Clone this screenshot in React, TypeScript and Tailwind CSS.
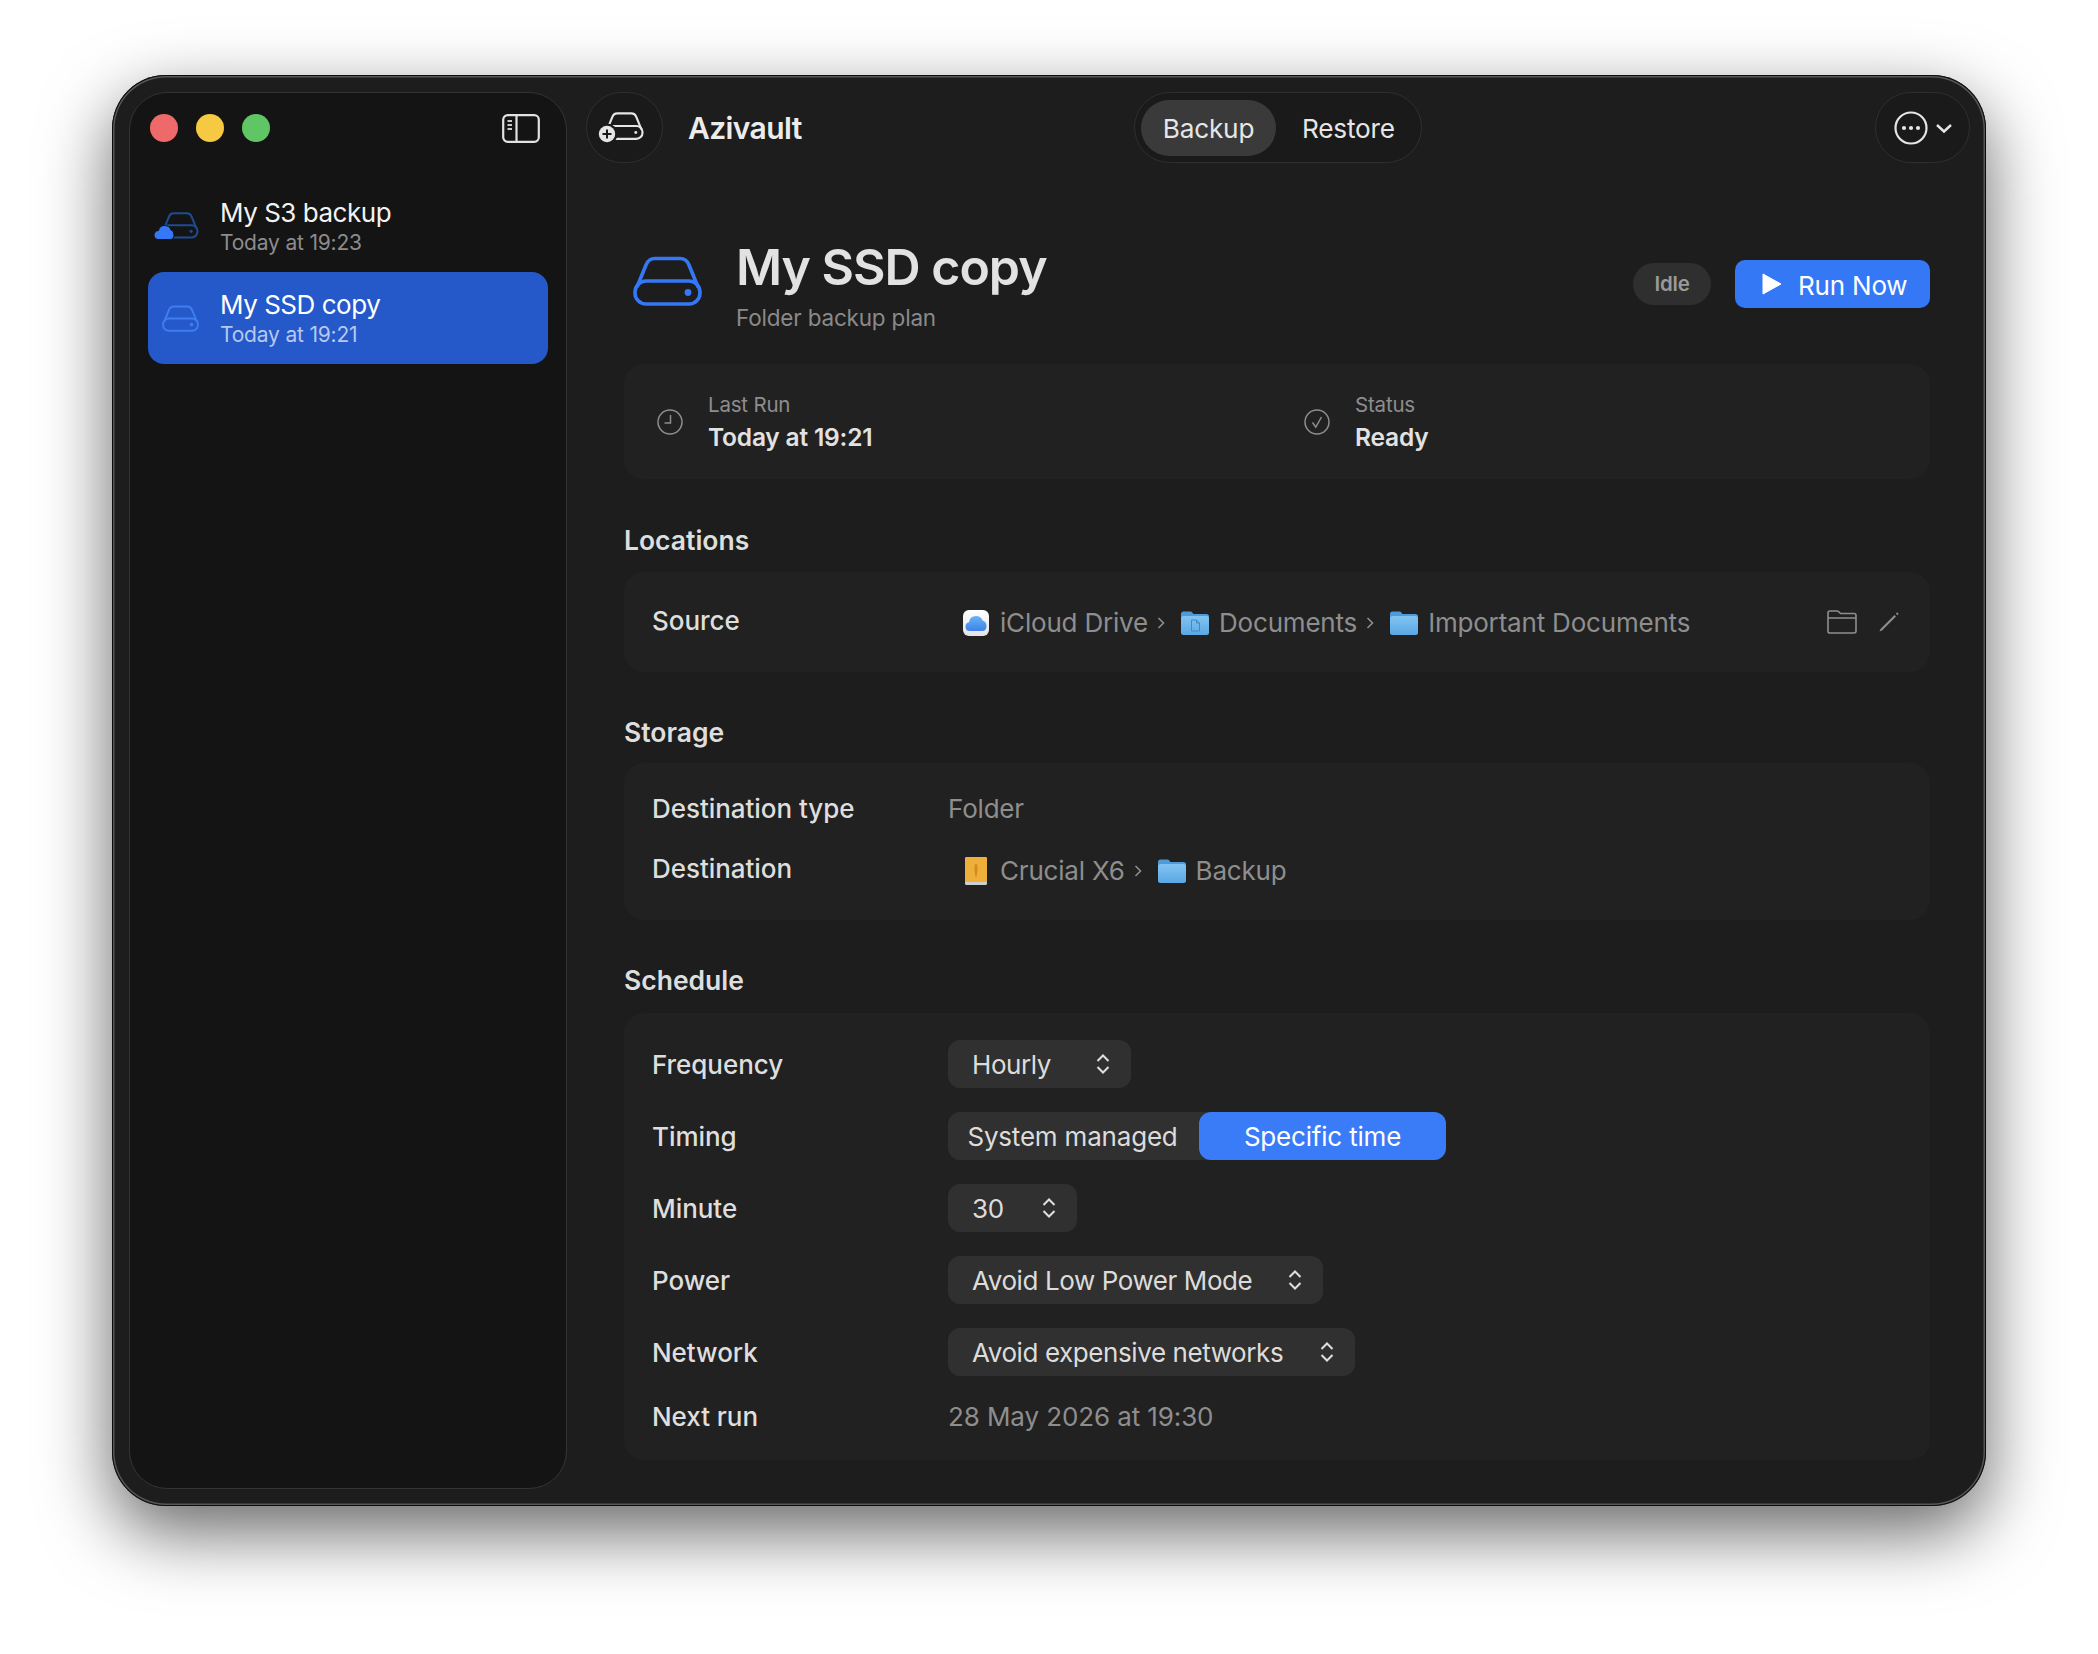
import React from 'react';

const DiskIcon = ({ color, className }: { color: string; className: string }) => (
  <svg viewBox="0 0 69 50" fill="none" className={className}>
    <path d="M4 31 L13 9 Q15.5 2.5 22 2.5 H47 Q53.5 2.5 56 9 L65 31" stroke={color} strokeWidth="3.6" />
    <rect x="2" y="25" width="65" height="23" rx="11" stroke={color} strokeWidth="3.6" />
    <circle cx="55" cy="36.5" r="3.4" fill={color} />
  </svg>
);

const AddDiskIcon = () => (
  <svg viewBox="0 0 48 34" fill="none" className="w-[48px] h-[34px]">
    <g transform="translate(8 1) scale(0.56)" stroke="#e6e6e6" strokeWidth="3.8">
      <path d="M4 31 L13 9 Q15.5 2.5 22 2.5 H47 Q53.5 2.5 56 9 L65 31" />
      <rect x="2" y="25" width="65" height="23" rx="11" />
      <circle cx="55" cy="36.5" r="2.6" fill="#e6e6e6" stroke="none" />
    </g>
    <circle cx="10" cy="23" r="10.5" fill="#1a1a1a" />
    <circle cx="10" cy="23" r="8.2" fill="#e6e6e6" />
    <path d="M10 18.5 V27.5 M5.5 23 H14.5" stroke="#1a1a1a" strokeWidth="2" />
  </svg>
);

const S3Icon = () => (
  <svg viewBox="0 0 46 30" fill="none" className="w-[46px] h-[30px]">
    <g transform="translate(9 1) scale(0.53)" stroke="#1f4b92" strokeWidth="3.8">
      <path d="M4 31 L13 9 Q15.5 2.5 22 2.5 H47 Q53.5 2.5 56 9 L65 31" />
      <rect x="2" y="25" width="65" height="23" rx="11" />
      <circle cx="55" cy="36.5" r="3" fill="#1f4b92" stroke="none" />
    </g>
    <path d="M1 24.5 Q1 20 5.5 19.5 Q6.5 14.5 11.5 14.5 Q16.5 14.5 18 19 Q21 19.5 21 24 Q21 28.5 17 28.5 H5 Q1 28.5 1 24.5 Z" fill="#3478f6" stroke="#141414" strokeWidth="1" />
  </svg>
);

const SidebarToggleIcon = () => (
  <svg viewBox="0 0 38 29" fill="none" className="w-[38px] h-[29px]">
    <rect x="1.2" y="1.2" width="35.6" height="26.6" rx="4.5" stroke="#e2e2e2" strokeWidth="2.2" />
    <path d="M14.5 1.5 V27.5" stroke="#e2e2e2" strokeWidth="2.2" />
    <path d="M5.5 7 H10 M5.5 11 H10 M5.5 15 H10" stroke="#c8c8c8" strokeWidth="1.8" />
  </svg>
);

const ClockIcon = () => (
  <svg viewBox="0 0 26 26" fill="none" className="w-[26px] h-[26px]">
    <circle cx="13" cy="13" r="12" stroke="#8e8e8e" strokeWidth="1.5" />
    <path d="M13.5 6 V14 H7.5" stroke="#8e8e8e" strokeWidth="1.5" />
  </svg>
);

const CheckIcon = () => (
  <svg viewBox="0 0 26 26" fill="none" className="w-[26px] h-[26px]">
    <circle cx="13" cy="13" r="12" stroke="#8e8e8e" strokeWidth="1.5" />
    <path d="M8.5 13.5 L11.8 18 L17.5 8" stroke="#8e8e8e" strokeWidth="1.5" />
  </svg>
);

const MoreIcon = () => (
  <svg viewBox="0 0 58 34" fill="none" className="w-[58px] h-[34px]">
    <circle cx="17" cy="17" r="15.5" stroke="#e6e6e6" strokeWidth="2.2" />
    <circle cx="10" cy="17" r="2.1" fill="#e6e6e6" />
    <circle cx="17" cy="17" r="2.1" fill="#e6e6e6" />
    <circle cx="24" cy="17" r="2.1" fill="#e6e6e6" />
    <path d="M43 14 L50 20.5 L57 14" stroke="#e6e6e6" strokeWidth="2.4" />
  </svg>
);

const UpDownIcon = () => (
  <svg viewBox="0 0 16 22" fill="none" className="w-[16px] h-[22px]">
    <path d="M2.5 8 L8 2.5 L13.5 8 M2.5 14 L8 19.5 L13.5 14" stroke="#e0e0e0" strokeWidth="2" />
  </svg>
);

const FolderIcon = ({ id, doc }: { id: string; doc?: boolean }) => (
  <svg viewBox="0 0 28 24" className="w-[28px] h-[24px] shrink-0">
    <defs>
      <linearGradient id={id} x1="0" y1="0" x2="0" y2="1">
        <stop offset="0" stopColor="#82c4f1" />
        <stop offset="1" stopColor="#5aa8e4" />
      </linearGradient>
    </defs>
    <path d="M0 3 Q0 0.5 2.5 0.5 H9 Q10.5 0.5 11.5 1.8 L12.5 3 H25.5 Q28 3 28 5.5 V10 H0 Z" fill="#4f9ad8" />
    <path d="M0 7.5 Q0 5 2.5 5 H25.5 Q28 5 28 7.5 V21.5 Q28 24 25.5 24 H2.5 Q0 24 0 21.5 Z" fill={`url(#${id})`} />
    {doc && <path d="M10.5 9 H15.5 L18.5 12 V20 H10.5 Z M15.5 9 V12 H18.5" fill="none" stroke="#4488bd" strokeWidth="1" />}
  </svg>
);

const CloudDriveIcon = () => (
  <svg viewBox="0 0 26 26" className="w-[26px] h-[26px] shrink-0">
    <defs>
      <linearGradient id="cloudTile" x1="0" y1="0" x2="0" y2="1">
        <stop offset="0" stopColor="#ffffff" />
        <stop offset="1" stopColor="#e4e4e4" />
      </linearGradient>
      <linearGradient id="cloudFill" x1="0" y1="0" x2="0" y2="1">
        <stop offset="0" stopColor="#68b4f4" />
        <stop offset="1" stopColor="#3c82ea" />
      </linearGradient>
    </defs>
    <rect width="26" height="26" rx="6" fill="url(#cloudTile)" />
    <path d="M7 21 Q2.5 21 2.5 16.5 Q2.5 13 6 12.2 Q7 6 13 6 Q18 6 19.5 10.5 Q23.5 11.5 23.5 16 Q23.5 21 19 21 Z" fill="url(#cloudFill)" />
  </svg>
);

const DriveBookIcon = () => (
  <svg viewBox="0 0 22 28" className="w-[22px] h-[28px] shrink-0">
    <rect width="22" height="28" rx="1.5" fill="#cfcfcf" />
    <path d="M0 1.5 Q0 0 1.5 0 H20.5 Q22 0 22 1.5 V25 H0 Z" fill="#eeb03a" />
    <path d="M11 7 Q12.5 7 12.5 9 V14 L11.5 20 H10.5 L9.5 14 V9 Q9.5 7 11 7 Z" fill="#d58a1f" />
  </svg>
);

const Crumb = () => (
  <svg viewBox="0 0 8 14" fill="none" className="w-[8px] h-[14px] ml-[9px] mr-[16px] shrink-0">
    <path d="M1.5 2 L6.5 7 L1.5 12" stroke="#8e8e8e" strokeWidth="1.6" />
  </svg>
);

const Label = ({ children, nudge }: { children: React.ReactNode; nudge?: boolean }) => (
  <div className={`w-[296px] shrink-0 text-[26px] leading-[32px] font-medium tracking-[-0.002em] text-[#dedede] ${nudge ? 'mt-[2px]' : ''}`}>{children}</div>
);

const Select = ({ value, width }: { value: string; width: string }) => (
  <div className={`flex items-center justify-between h-[48px] pl-[24px] pr-[20px] rounded-[12px] bg-[#303030] text-[26px] tracking-[-0.016em] text-[#dcdcdc] ${width}`}>
    <span>{value}</span>
    <UpDownIcon />
  </div>
);

const SectionTitle = ({ children }: { children: React.ReactNode }) => (
  <h2 className="text-[26.5px] leading-[32px] font-semibold tracking-normal text-[#dedede]">{children}</h2>
);

export default function App() {
  return (
    <div className="w-[2098px] h-[1654px] bg-white pl-[112px] pt-[75px] overflow-hidden [font-family:Inter,'Noto_Sans',sans-serif] tracking-[-0.012em]">
      <div className="flex w-[1874px] h-[1431px] pl-[17px] py-[17px] rounded-[54px] bg-[#1d1d1d] shadow-[0_26px_70px_rgba(0,0,0,0.6),inset_0_0_0_1px_#0c0c0c,inset_0_0_0_2.5px_#565656]">
        {/* sidebar */}
        <aside className="w-[438px] shrink-0 rounded-[38px] border-[1.5px] border-[#343434] bg-[#141414] px-[18px]">
          <div className="flex items-center justify-between h-[70px] pl-[2px] pr-[8px]">
            <div className="flex gap-[18px]">
              <span className="w-[28px] h-[28px] rounded-full bg-[#ee6a6a]" />
              <span className="w-[28px] h-[28px] rounded-full bg-[#f5c942]" />
              <span className="w-[28px] h-[28px] rounded-full bg-[#60c564]" />
            </div>
            <SidebarToggleIcon />
          </div>
          <div className="mt-[17px]">
            <div className="flex items-center h-[92px] rounded-[16px]">
              <div className="w-[72px] pl-[5px] shrink-0"><S3Icon /></div>
              <div className="pt-[2px]">
                <div className="text-[26px] leading-[32px] tracking-[-0.018em] text-[#f2f2f2]">My S3 backup</div>
                <div className="text-[21px] leading-[28px] text-[#8c8c8c]">Today at 19:23</div>
              </div>
            </div>
            <div className="flex items-center h-[92px] rounded-[16px] bg-[#2558c9]">
              <div className="w-[72px] pl-[14px] shrink-0"><DiskIcon color="#3f7ef0" className="w-[37px] h-[27px]" /></div>
              <div className="pt-[2px]">
                <div className="text-[26px] leading-[32px] tracking-[-0.018em] text-white">My SSD copy</div>
                <div className="text-[21px] leading-[28px] text-[#b6c8f0]">Today at 19:21</div>
              </div>
            </div>
          </div>
        </aside>

        {/* main */}
        <main className="flex-1 pl-[19px] pr-[16px]">
          <header className="grid grid-cols-[1fr_auto_1fr] items-center h-[71px]">
            <div className="flex items-center">
              <div className="flex items-center justify-center w-[77px] h-[71px] pr-[7px] rounded-full border-[1.5px] border-[#2f2f2f] bg-[#1a1a1a]">
                <AddDiskIcon />
              </div>
              <span className="ml-[25px] pt-[2px] text-[30px] font-semibold tracking-[-0.02em] text-[#ececec]">Azivault</span>
            </div>
            <div className="flex items-center h-[71px] w-[288px] px-[6px] rounded-full border-[1.5px] border-[#2f2f2f] bg-[#1a1a1a] text-[26.2px] text-[#e6e6e6]">
              <span className="flex items-center justify-center w-[135px] h-[56px] pt-[3px] rounded-full bg-[#3a3a3a]">Backup</span>
              <span className="ml-[26px] pt-[3px]">Restore</span>
            </div>
            <div className="flex justify-end">
              <div className="flex items-center justify-center w-[95px] h-[71px] rounded-full border-[1.5px] border-[#2f2f2f] bg-[#1a1a1a]">
                <MoreIcon />
              </div>
            </div>
          </header>

          <div className="pl-[38px] pr-[40px]">
            {/* plan title */}
            <div className="flex items-start h-[124px] mt-[77px] pl-[9px]">
              <DiskIcon color="#3478f6" className="w-[69px] h-[50px] mt-[16px] shrink-0" />
              <div className="ml-[34px]">
                <h1 className="text-[50px] leading-[54px] font-semibold tracking-[-0.02em] text-[#e2e2e2]">My SSD copy</h1>
                <p className="mt-[9px] text-[22.5px] leading-[30px] text-[#8a8a8a]">Folder backup plan</p>
              </div>
              <div className="flex items-center gap-[24px] ml-auto mt-[20px]">
                <span className="flex items-center justify-center w-[78px] h-[42px] rounded-full bg-[#2f2f2f] text-[20.5px] font-semibold text-[#9a9a9a]">Idle</span>
                <button className="flex items-center w-[195px] h-[48px] pl-[27px] rounded-[10px] bg-[#3478f6] text-[26px] text-white">
                  <svg viewBox="0 0 20 22" className="w-[20px] h-[22px]"><path d="M1 1 L19 11 L1 21 Z" fill="#fff" stroke="#fff" strokeWidth="1" strokeLinejoin="round" /></svg>
                  <span className="ml-[16px] pt-[2px]">Run Now</span>
                </button>
              </div>
            </div>

            {/* last run */}
            <div className="grid grid-cols-[647px_1fr] items-center h-[115px] pl-[33px] rounded-[20px] bg-[#212121]">
              <div className="flex items-center gap-[25px]">
                <ClockIcon />
                <div className="pt-[2px]">
                  <div className="text-[20.5px] leading-[28px] text-[#8e8e8e]">Last Run</div>
                  <div className="mt-[1px] text-[24.5px] leading-[34px] font-semibold text-[#e2e2e2]">Today at 19:21</div>
                </div>
              </div>
              <div className="flex items-center gap-[25px]">
                <CheckIcon />
                <div className="pt-[2px]">
                  <div className="text-[20.5px] leading-[28px] text-[#8e8e8e]">Status</div>
                  <div className="mt-[1px] text-[24.5px] leading-[34px] font-semibold text-[#e2e2e2]">Ready</div>
                </div>
              </div>
            </div>

            {/* locations */}
            <div className="mt-[45px] mb-[16px]"><SectionTitle>Locations</SectionTitle></div>
            <div className="flex items-center h-[100px] pl-[28px] pr-[30px] pb-[2px] rounded-[20px] bg-[#212121]">
              <Label>Source</Label>
              <div className="flex items-center ml-[15px] mt-[3px] text-[26px] text-[#8e8e8e]">
                <CloudDriveIcon />
                <span className="ml-[11px]">iCloud Drive</span>
                <Crumb />
                <FolderIcon id="folderDocs" doc />
                <span className="ml-[10px]">Documents</span>
                <Crumb />
                <FolderIcon id="folderImportant" />
                <span className="ml-[10px]">Important Documents</span>
              </div>
              <div className="flex items-center gap-[21px] ml-auto mt-[2px]">
                <svg viewBox="0 0 30 24" fill="none" className="w-[30px] h-[24px]">
                  <path d="M1 21.5 V3 Q1 1 3 1 H10 Q11 1 12 2 L13.5 3.5 H27 Q29 3.5 29 5.5 V21 Q29 23 27 23 H3 Q1 23 1 21.5 Z M1 8 H29" stroke="#8e8e8e" strokeWidth="1.6" />
                </svg>
                <svg viewBox="0 0 22 22" fill="none" className="w-[22px] h-[22px]">
                  <path d="M1.5 20.5 L2.5 18 L16.5 4 L18 5.5 L4 19.5 Z" fill="#8e8e8e" />
                  <path d="M18.5 2 L20 3.5" stroke="#8e8e8e" strokeWidth="1.8" />
                </svg>
              </div>
            </div>

            {/* storage */}
            <div className="mt-[44px] mb-[15px]"><SectionTitle>Storage</SectionTitle></div>
            <div className="flex flex-col gap-[20px] pt-[26px] pb-[31px] pl-[28px] rounded-[20px] bg-[#212121]">
              <div className="flex items-center h-[40px]">
                <Label>Destination type</Label>
                <span className="mb-[2px] text-[26px] text-[#8e8e8e]">Folder</span>
              </div>
              <div className="flex items-center h-[40px]">
                <Label>Destination</Label>
                <div className="flex items-center ml-[17px] mt-[3px] text-[26px] text-[#8e8e8e]">
                  <DriveBookIcon />
                  <span className="ml-[13px]">Crucial X6</span>
                  <Crumb />
                  <FolderIcon id="folderBackup" />
                  <span className="ml-[10px]">Backup</span>
                </div>
              </div>
            </div>

            {/* schedule */}
            <div className="mt-[44px] mb-[17px]"><SectionTitle>Schedule</SectionTitle></div>
            <div className="flex flex-col gap-[24px] pt-[27px] pb-[26px] pl-[28px] rounded-[20px] bg-[#212121]">
              <div className="flex items-center">
                <Label nudge>Frequency</Label>
                <Select value="Hourly" width="w-[183px]" />
              </div>
              <div className="flex items-center">
                <Label nudge>Timing</Label>
                <div className="flex h-[48px] w-[498px] rounded-[12px] bg-[#303030] text-[26px]">
                  <span className="flex items-center justify-center w-[251px] pr-[2px] text-[#dcdcdc]">System managed</span>
                  <span className="flex items-center justify-center flex-1 rounded-[12px] bg-[#3a7bf8] text-white">Specific time</span>
                </div>
              </div>
              <div className="flex items-center">
                <Label nudge>Minute</Label>
                <Select value="30" width="w-[129px]" />
              </div>
              <div className="flex items-center">
                <Label nudge>Power</Label>
                <Select value="Avoid Low Power Mode" width="w-[375px]" />
              </div>
              <div className="flex items-center">
                <Label nudge>Network</Label>
                <Select value="Avoid expensive networks" width="w-[407px]" />
              </div>
              <div className="flex items-center h-[34px]">
                <Label>Next run</Label>
                <span className="mb-[2px] text-[26px] tracking-[-0.004em] text-[#8e8e8e]">28 May 2026 at 19:30</span>
              </div>
            </div>
          </div>
        </main>
      </div>
    </div>
  );
}
